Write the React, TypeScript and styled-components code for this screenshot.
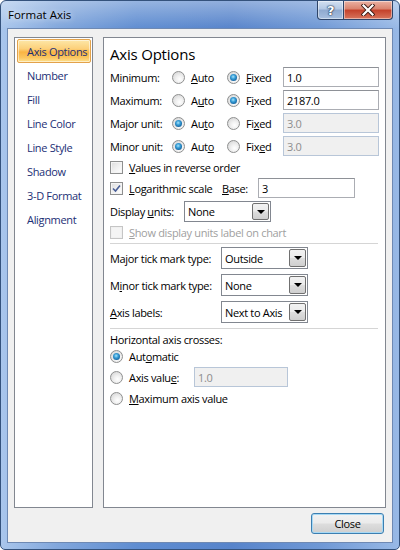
import styled, { createGlobalStyle } from 'styled-components';

const GlobalStyle = createGlobalStyle`
  html, body {
    margin: 0;
    padding: 0;
    background: #ffffff;
  }
  body {
    font-family: 'Open Sans', 'Noto Sans', sans-serif;
    font-size: 11px;
    letter-spacing: -0.33px;
    color: #000000;
  }
`;

const Window = styled.div`
  width: 400px;
  height: 550px;
  box-sizing: border-box;
  border: 1px solid #34527c;
  border-radius: 6px 6px 5px 5px;
  background:
    linear-gradient(rgba(255, 255, 255, 0.35), rgba(255, 255, 255, 0) 28px),
    linear-gradient(to right, #a9c6ec 0%, #82a7dc 14%, #5f8dd1 34%, #5784cb 58%, #6f98d5 80%, #98b9e6 100%);
  display: flex;
  flex-direction: column;
  overflow: hidden;
`;

const TitleBar = styled.div`
  height: 27px;
  display: flex;
  align-items: flex-start;
  padding: 0 6px 0 7px;
  flex: none;
`;

const Title = styled.div`
  font-size: 11.5px;
  letter-spacing: 0;
  line-height: 27px;
  color: #000000;
  text-shadow: 0 0 6px rgba(255, 255, 255, 0.9);
`;

const CaptionButtons = styled.div`
  margin-left: auto;
  display: flex;
`;

const CaptionButton = styled.div<{ $variant: 'help' | 'close' }>`
  width: ${p => (p.$variant === 'help' ? '27px' : '49px')};
  height: 19px;
  box-sizing: border-box;
  border: 1px solid #2e4468;
  border-top: none;
  border-left: ${p => (p.$variant === 'close' ? 'none' : '1px solid #2e4468')};
  border-radius: ${p => (p.$variant === 'help' ? '0 0 0 4px' : '0 0 4px 0')};
  background: ${p =>
    p.$variant === 'help'
      ? 'linear-gradient(#d3e0f1 0%, #b3c8e4 45%, #8fa9cf 50%, #a7bfdf 100%)'
      : 'linear-gradient(#eab2a4 0%, #d9826d 45%, #c4402a 50%, #d8755d 100%)'};
  box-shadow: inset 0 0 0 1px rgba(255, 255, 255, 0.45);
  display: flex;
  align-items: center;
  justify-content: center;
`;

const HelpGlyph = styled.span`
  font-family: 'DejaVu Sans', sans-serif;
  font-weight: bold;
  font-size: 13px;
  color: #ffffff;
  text-shadow: 0 0 1px #1c2f4d, 0 0 1px #1c2f4d, 0 0 2px #1c2f4d;
  line-height: 1;
`;

const Client = styled.div`
  flex: 1;
  margin: 0 6px 6px 6px;
  box-sizing: border-box;
  border: 1px solid #6e89b3;
  background: #f0f0f0;
  display: flex;
  flex-direction: column;
  padding: 8px 6px 0 6px;
`;

const Body = styled.div`
  display: flex;
  gap: 10px;
  height: 471px;
`;

const NavPanel = styled.div`
  width: 80px;
  box-sizing: border-box;
  border: 1px solid #828790;
  background: #ffffff;
  padding: 1px 1px 0 2px;
  display: flex;
  flex-direction: column;
`;

const NavItem = styled.div<{ $active?: boolean }>`
  height: 24px;
  box-sizing: border-box;
  padding-left: 9px;
  display: flex;
  align-items: center;
  color: #1b2f75;
  white-space: nowrap;
  border-radius: 2px;
  border: 1px solid ${p => (p.$active ? '#e3a24a' : 'transparent')};
  background: ${p =>
    p.$active
      ? 'linear-gradient(#fde7a8 0%, #fcd07a 40%, #f9b443 55%, #fbc65f 80%, #fde191 100%)'
      : 'transparent'};
  box-shadow: ${p => (p.$active ? 'inset 0 0 0 1px rgba(255,255,255,0.5)' : 'none')};
`;

const ContentPanel = styled.div`
  flex: 1;
  box-sizing: border-box;
  border: 1px solid #828790;
  background: #ffffff;
  padding: 6px 6px 0 6px;
  display: flex;
  flex-direction: column;
`;

const Heading = styled.div`
  font-size: 15px;
  letter-spacing: -0.2px;
  line-height: 20px;
  height: 20px;
  margin-bottom: 3px;
  color: #000000;
`;

const UnitRows = styled.div`
  display: flex;
  flex-direction: column;
  gap: 3px;
`;

const UnitRow = styled.div`
  display: grid;
  grid-template-columns: 62px 55px 56px 96px;
  align-items: center;
  height: 20px;
`;

const Row = styled.div<{ $h: number; $mt?: number }>`
  display: flex;
  align-items: center;
  height: ${p => p.$h}px;
  margin-top: ${p => p.$mt ?? 0}px;
`;

const Label = styled.span<{ $w?: number; $disabled?: boolean }>`
  width: ${p => (p.$w ? `${p.$w}px` : 'auto')};
  flex: none;
  white-space: nowrap;
  color: ${p => (p.$disabled ? '#a0a0a0' : '#000000')};
`;

const Option = styled.label<{ $w?: number; $disabled?: boolean }>`
  display: flex;
  align-items: center;
  gap: 6px;
  width: ${p => (p.$w ? `${p.$w}px` : 'auto')};
  flex: none;
  white-space: nowrap;
  color: ${p => (p.$disabled ? '#a0a0a0' : '#000000')};
`;

const Radio = styled.span<{ $checked?: boolean }>`
  width: 13px;
  height: 13px;
  box-sizing: border-box;
  border-radius: 50%;
  border: 1px solid #8e8f8f;
  background: radial-gradient(circle at 60% 65%, #ffffff 0%, #f1f1f1 35%, #cfcfcf 100%);
  position: relative;
  flex: none;

  &::after {
    content: '';
    display: ${p => (p.$checked ? 'block' : 'none')};
    position: absolute;
    left: 2px;
    top: 2px;
    width: 7px;
    height: 7px;
    border-radius: 50%;
    background: radial-gradient(circle at 45% 40%, #a9e4fb 0%, #3aa0d8 35%, #186aa6 70%, #0f3f6b 100%);
  }
`;

const CheckBox = styled.span<{ $disabled?: boolean }>`
  width: 13px;
  height: 13px;
  box-sizing: border-box;
  border: 1px solid ${p => (p.$disabled ? '#c5c5c5' : '#8e8f8f')};
  background: ${p =>
    p.$disabled ? '#f4f4f4' : 'linear-gradient(135deg, #dcdcdc 0%, #f0f0f0 50%, #ffffff 100%)'};
  box-shadow: inset 0 0 0 1px ${p => (p.$disabled ? '#f0f0f0' : '#f4f4f4')};
  display: flex;
  align-items: center;
  justify-content: center;
  flex: none;
`;

const TextBox = styled.div<{ $w: number; $disabled?: boolean }>`
  width: ${p => p.$w}px;
  height: 20px;
  box-sizing: border-box;
  border: 1px solid ${p => (p.$disabled ? '#b8c6d8' : '#abadb3')};
  border-top-color: ${p => (p.$disabled ? '#b8c6d8' : '#8e9197')};
  background: ${p => (p.$disabled ? '#f0f0f0' : '#ffffff')};
  color: ${p => (p.$disabled ? '#8d8d8d' : '#000000')};
  padding-left: 3px;
  display: flex;
  align-items: center;
  flex: none;
`;

const Select = styled.div<{ $w: number; $h: number }>`
  width: ${p => p.$w}px;
  height: ${p => p.$h}px;
  box-sizing: border-box;
  border: 1px solid #828790;
  background: #ffffff;
  padding: 0 1px 0 3px;
  display: flex;
  align-items: center;
  flex: none;
`;

const SelectText = styled.span`
  flex: 1;
  white-space: nowrap;
`;

const SelectArrow = styled.span`
  width: 17px;
  height: calc(100% - 2px);
  box-sizing: border-box;
  border: 1px solid #707070;
  border-radius: 2px;
  background: linear-gradient(#f2f2f2 0%, #ebebeb 48%, #dddddd 52%, #cfcfcf 100%);
  display: flex;
  align-items: center;
  justify-content: center;

  &::before {
    content: '';
    border-left: 4px solid transparent;
    border-right: 4px solid transparent;
    border-top: 4px solid #000000;
  }
`;

const Separator = styled.div<{ $mt?: number }>`
  height: 1px;
  background: #d5d5d5;
  margin-top: ${p => p.$mt ?? 0}px;
  margin-right: 1px;
`;

const Footer = styled.div`
  display: flex;
  justify-content: flex-end;
  padding: 5px 2px 0 0;
`;

const PushButton = styled.button`
  width: 73px;
  height: 21px;
  box-sizing: border-box;
  border: 1px solid #3c7fb1;
  border-radius: 3px;
  background: linear-gradient(#f2f2f2 0%, #ebebeb 48%, #dddddd 52%, #cfcfcf 100%);
  box-shadow: inset 0 0 0 1px #a7d9f5;
  font-family: inherit;
  font-size: 11px;
  letter-spacing: inherit;
  color: #000000;
  padding: 0;
`;

const CheckMark = () => (
  <svg width="9" height="9" viewBox="0 0 9 9">
    <path d="M1 4.5 L3.5 7 L8 1.5" fill="none" stroke="#4a5f97" strokeWidth="1.6" />
  </svg>
);

const CloseGlyph = () => (
  <svg width="14" height="12" viewBox="0 0 14 12">
    <path d="M2.5 1.5 L11.5 10.5 M11.5 1.5 L2.5 10.5" stroke="#3b1a14" strokeWidth="4" strokeLinecap="square" />
    <path d="M2.5 1.5 L11.5 10.5 M11.5 1.5 L2.5 10.5" stroke="#ffffff" strokeWidth="2.2" strokeLinecap="square" />
  </svg>
);

const navItems = ['Axis Options', 'Number', 'Fill', 'Line Color', 'Line Style', 'Shadow', '3-D Format', 'Alignment'];

interface UnitRowData {
  label: string;
  autoKey: number;
  fixedKey: number;
  fixed: boolean;
  value: string;
}

const unitRows: UnitRowData[] = [
  { label: 'Minimum:', autoKey: 0, fixedKey: 0, fixed: true, value: '1.0' },
  { label: 'Maximum:', autoKey: 1, fixedKey: 1, fixed: true, value: '2187.0' },
  { label: 'Major unit:', autoKey: 2, fixedKey: 2, fixed: false, value: '3.0' },
  { label: 'Minor unit:', autoKey: 3, fixedKey: 3, fixed: false, value: '3.0' },
];

// renders a word with its access key underlined
const Accel = ({ text, at }: { text: string; at: number }) => (
  <span>
    {text.slice(0, at)}
    <u>{text[at]}</u>
    {text.slice(at + 1)}
  </span>
);

const App = () => {
  return (
    <>
      <GlobalStyle />
      <Window>
        <TitleBar>
          <Title>Format Axis</Title>
          <CaptionButtons>
            <CaptionButton $variant="help">
              <HelpGlyph>?</HelpGlyph>
            </CaptionButton>
            <CaptionButton $variant="close">
              <CloseGlyph />
            </CaptionButton>
          </CaptionButtons>
        </TitleBar>
        <Client>
          <Body>
            <NavPanel>
              {navItems.map((item, i) => (
                <NavItem key={item} $active={i === 0}>
                  {item}
                </NavItem>
              ))}
            </NavPanel>
            <ContentPanel>
              <Heading>Axis Options</Heading>
              <UnitRows>
                {unitRows.map(row => (
                  <UnitRow key={row.label}>
                    <Label>{row.label}</Label>
                    <Option>
                      <Radio $checked={!row.fixed} />
                      <Accel text="Auto" at={row.autoKey} />
                    </Option>
                    <Option>
                      <Radio $checked={row.fixed} />
                      <Accel text="Fixed" at={row.fixedKey} />
                    </Option>
                    <TextBox $w={96} $disabled={!row.fixed}>
                      {row.value}
                    </TextBox>
                  </UnitRow>
                ))}
              </UnitRows>

              <Row $h={20} $mt={1}>
                <Option>
                  <CheckBox />
                  <Accel text="Values in reverse order" at={0} />
                </Option>
              </Row>
              <Row $h={22}>
                <Option $w={112}>
                  <CheckBox>
                    <CheckMark />
                  </CheckBox>
                  <Accel text="Logarithmic scale" at={0} />
                </Option>
                <Label $w={36}>
                  <Accel text="Base:" at={0} />
                </Label>
                <TextBox $w={97}>3</TextBox>
              </Row>
              <Row $h={21} $mt={2}>
                <Label $w={74}>
                  <Accel text="Display units:" at={8} />
                </Label>
                <Select $w={87} $h={21}>
                  <SelectText>None</SelectText>
                  <SelectArrow />
                </Select>
              </Row>
              <Row $h={21}>
                <Option $disabled>
                  <CheckBox $disabled />
                  <Accel text="Show display units label on chart" at={0} />
                </Option>
              </Row>
              <Separator />

              <Row $h={22} $mt={3}>
                <Label $w={111}>
                  <Accel text="Major tick mark type:" at={2} />
                </Label>
                <Select $w={87} $h={22}>
                  <SelectText>Outside</SelectText>
                  <SelectArrow />
                </Select>
              </Row>
              <Row $h={22} $mt={5}>
                <Label $w={111}>
                  <Accel text="Minor tick mark type:" at={1} />
                </Label>
                <Select $w={87} $h={22}>
                  <SelectText>None</SelectText>
                  <SelectArrow />
                </Select>
              </Row>
              <Row $h={22} $mt={5}>
                <Label $w={111}>
                  <Accel text="Axis labels:" at={0} />
                </Label>
                <Select $w={87} $h={22}>
                  <SelectText>Next to Axis</SelectText>
                  <SelectArrow />
                </Select>
              </Row>
              <Separator $mt={5} />

              <Row $h={18} $mt={1}>
                <Label>Horizontal axis crosses:</Label>
              </Row>
              <Row $h={16}>
                <Option>
                  <Radio $checked />
                  <Accel text="Automatic" at={3} />
                </Option>
              </Row>
              <Row $h={20} $mt={3}>
                <Option $w={84}>
                  <Radio />
                  <Accel text="Axis value:" at={9} />
                </Option>
                <TextBox $w={94} $disabled>
                  1.0
                </TextBox>
              </Row>
              <Row $h={22}>
                <Option>
                  <Radio />
                  <Accel text="Maximum axis value" at={0} />
                </Option>
              </Row>
            </ContentPanel>
          </Body>
          <Footer>
            <PushButton>Close</PushButton>
          </Footer>
        </Client>
      </Window>
    </>
  );
};

export default App;
